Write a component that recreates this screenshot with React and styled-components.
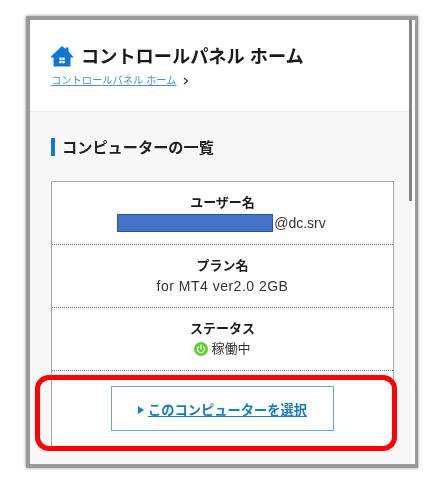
import React from "react";
import styled, { createGlobalStyle } from "styled-components";

const Global = createGlobalStyle`
  html, body { margin: 0; padding: 0; background: #fff; overflow: hidden; }
  #root { width: 440px; height: 487px; }
  * { box-sizing: border-box; }
`;
const Page = styled.div`
  position: relative;
  width: 440px;
  height: 487px;
  padding: 16px 22px 19px 26px;
  background: #fff;
  font-family: "Liberation Sans", "Noto Sans CJK JP", sans-serif;
  color: #222;
`;
const Frame = styled.div`
  position: relative;
  height: 100%;
  border: solid #9a9a9a;
  border-width: 4px 3px 4px 4px;
  box-shadow: 0 0 3px rgba(0, 0, 0, 0.45);
  overflow: hidden;
  background: #f7f7f7;
  filter: blur(0.4px);
`;
const Scrollbar = styled.div`
  position: absolute;
  top: 0;
  right: 3px;
  width: 3px;
  height: 181px;
  background: #858585;
`;
const Gutter = styled.div`
  position: absolute;
  top: 0;
  right: 0;
  bottom: 0;
  width: 3px;
  background: #fdfdfd;
`;
const Header = styled.header`
  height: 92px;
  padding: 25px 0 0 21px;
  background: #fff;
  border-bottom: 1px solid #ececec;
`;
const TitleRow = styled.div`
  display: flex;
  align-items: center;
  gap: 8px;
  height: 22px;
`;
const Title = styled.h1`
  margin: 0;
  padding-top: 2px;
  font-size: 18.2px;
  line-height: 22px;
  font-weight: 700;
  color: #1a1a1a;
  white-space: pre;
`;
const Crumbs = styled.div`
  display: flex;
  align-items: center;
  gap: 6px;
  margin-top: 6px;
  font-size: 10.25px;
  line-height: 16px;
`;
const CrumbLink = styled.a`
  color: #4a92c8;
  text-decoration: underline;
  white-space: pre;
`;
const Main = styled.main`
  padding: 26px 21px 0 21px;
`;
const SectionTitle = styled.h2`
  margin: 0 0 25px;
  height: 18px;
  padding-left: 7px;
  border-left: 4px solid #1279d0;
  font-size: 15.2px;
  line-height: 20px;
  font-weight: 700;
  color: #222;
`;
const Table = styled.div`
  width: 343px;
  background: #fff;
  border: 1px solid #a8a8a8;
`;
const Row = styled.div`
  height: 63px;
  padding-top: 11px;
  border-bottom: 1px dotted #777;
  text-align: center;
`;
const Label = styled.div`
  font-size: 13px;
  line-height: 19px;
  font-weight: 700;
  color: #1c1c1c;
`;
const Value = styled.div`
  display: flex;
  justify-content: center;
  align-items: center;
  gap: ${(p) => p.$gap || 1}px;
  padding-top: ${(p) => p.$drop || 0}px;
  padding-right: ${(p) => p.$nudge || 0}px;
  font-size: ${(p) => p.$size || 14}px;
  letter-spacing: ${(p) => p.$spacing || 0}px;
  line-height: 21px;
  color: #333;
`;
const Redacted = styled.span`
  width: 156px;
  height: 18px;
  margin-bottom: 2px;
  background: #4472c4;
  border: 1px solid #2f5597;
`;
const ButtonCell = styled.div`
  display: flex;
  justify-content: center;
  padding: 15px 0 15px;
`;
const SelectButton = styled.a`
  display: flex;
  justify-content: center;
  align-items: center;
  gap: 4px;
  width: 223px;
  height: 45px;
  padding-top: 2px;
  border: 1px solid #6fa3cc;
  background: #fff;
  font-size: 13.25px;
  font-weight: 700;
  color: #1b7ac4;
`;
const Triangle = styled.span`
  width: 0;
  height: 0;
  border-left: 6px solid #1b7ac4;
  border-top: 4px solid transparent;
  border-bottom: 4px solid transparent;
`;
const ButtonText = styled.span`
  text-decoration: underline;
`;
const Highlight = styled.div`
  position: absolute;
  left: 35px;
  top: 375px;
  width: 362px;
  height: 76px;
  border: 5px solid #ff0000;
  border-radius: 14px;
`;

const HomeIcon = () => (
  <svg width="22" height="21" viewBox="0 0 22 21">
    <path fill="#0f76d2" d="M11 0 L14.5 3 V1.5 H17.5 V5.6 L22 10.6 V11.6 H19.5 V20.5 H2.5 V11.6 H0 V10.6 Z" />
    <path fill="#fff" d="M8.3 11.6h2.4v2.4h-2.4zM11.3 11.6h2.4v2.4h-2.4zM8.3 14.8h2.4v2.4h-2.4zM11.3 14.8h2.4v2.4h-2.4z" />
  </svg>
);
const Chevron = () => (
  <svg width="6" height="8" viewBox="0 0 6 8">
    <path d="M1 1l3.5 3L1 7" fill="none" stroke="#333" strokeWidth="1.3" />
  </svg>
);
const PowerIcon = () => (
  <svg width="14" height="14" viewBox="0 0 14 14">
    <circle cx="7" cy="7" r="7" fill="#5fcf2f" />
    <path d="M4.6 4.6a3.5 3.5 0 1 0 4.8 0" fill="none" stroke="#fff" strokeWidth="1.3" strokeLinecap="round" />
    <path d="M7 3v4" stroke="#fff" strokeWidth="1.3" strokeLinecap="round" />
  </svg>
);

export default function App() {
  return (
    <Page>
      <Global />
      <Frame>
        <Header>
          <TitleRow>
            <HomeIcon />
            <Title>コントロールパネル ホーム</Title>
          </TitleRow>
          <Crumbs>
            <CrumbLink>コントロールパネル ホーム</CrumbLink>
            <Chevron />
          </Crumbs>
        </Header>
        <Main>
          <SectionTitle>コンピューターの一覧</SectionTitle>
          <Table>
            <Row>
              <Label>ユーザー名</Label>
              <Value $drop={1} $nudge={2}><Redacted />@dc.srv</Value>
            </Row>
            <Row>
              <Label>プラン名</Label>
              <Value $drop={1} $spacing={0.5}>for MT4 ver2.0 2GB</Value>
            </Row>
            <Row>
              <Label>ステータス</Label>
              <Value $size={13} $gap={3}><PowerIcon />稼働中</Value>
            </Row>
            <ButtonCell>
              <SelectButton>
                <Triangle />
                <ButtonText>このコンピューターを選択</ButtonText>
              </SelectButton>
            </ButtonCell>
          </Table>
        </Main>
        <Gutter />
        <Scrollbar />
      </Frame>
      <Highlight />
    </Page>
  );
}
